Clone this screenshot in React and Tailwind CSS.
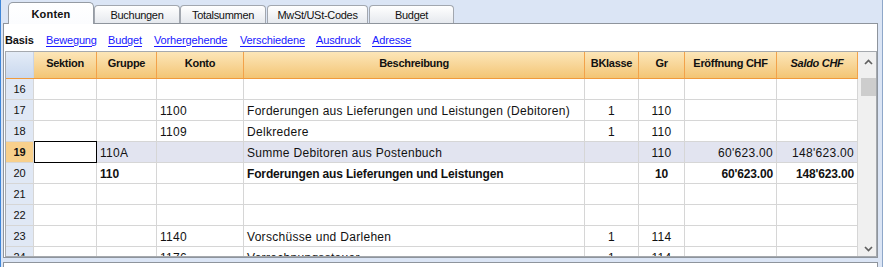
import React from "react";

const cols = [
  { key: "sek", label: "Sektion", w: "w-[63px]", align: "left" },
  { key: "grp", label: "Gruppe", w: "w-[60px]", align: "left" },
  { key: "kto", label: "Konto", w: "w-[87px]", align: "left" },
  { key: "bes", label: "Beschreibung", w: "w-[341px]", align: "left" },
  { key: "bk", label: "BKlasse", w: "w-[54px]", align: "center" },
  { key: "gr", label: "Gr", w: "w-[46px]", align: "center" },
  { key: "er", label: "Eröffnung CHF", w: "w-[92px]", align: "right" },
  { key: "sa", label: "Saldo CHF", w: "w-[81px]", align: "right", italic: true },
];

const rows = [
  { n: 16 },
  { n: 17, kto: "1100", bes: "Forderungen aus Lieferungen und Leistungen (Debitoren)", bk: "1", gr: "110" },
  { n: 18, kto: "1109", bes: "Delkredere", bk: "1", gr: "110" },
  { n: 19, grp: "110A", bes: "Summe Debitoren aus Postenbuch", gr: "110", er: "60'623.00", sa: "148'623.00", current: true },
  { n: 20, grp: "110", bes: "Forderungen aus Lieferungen und Leistungen", gr: "10", er: "60'623.00", sa: "148'623.00", bold: true },
  { n: 21 },
  { n: 22 },
  { n: 23, kto: "1140", bes: "Vorschüsse und Darlehen", bk: "1", gr: "114" },
  { n: 24, kto: "1176", bes: "Verrechnungssteuer", bk: "1", gr: "114" },
];

const alignCls = {
  left: "justify-start pl-[3px]",
  center: "justify-center",
  right: "justify-end pr-[3px]",
};

function Tab({ label, w, gap }) {
  return (
    <div
      className={`${w} ${gap ? "ml-[1px]" : ""} h-[18px] rounded-t-[4px] border border-b-0 border-[#a2a7af] bg-gradient-to-b from-white to-[#e6e9ee] flex items-center justify-center pt-[1px] text-[11px] tracking-[-0.3px] text-[#111]`}
    >
      {label}
    </div>
  );
}

function Chevron({ down }) {
  return (
    <svg width="9" height="6" viewBox="0 0 9 6">
      <polyline
        points={down ? "1,1 4.5,4.5 8,1" : "1,5 4.5,1.5 8,5"}
        fill="none"
        stroke="#606060"
        strokeWidth="1.7"
      />
    </svg>
  );
}

export default function App() {
  const links = [
    { t: "Bewegung", w: "w-[62px]" },
    { t: "Budget", w: "w-[46px]" },
    { t: "Vorhergehende", w: "w-[86px]" },
    { t: "Verschiedene", w: "w-[76px]" },
    { t: "Ausdruck", w: "w-[56px]" },
    { t: "Adresse", w: "w-[60px]" },
  ];
  return (
    <div className="w-[883px] h-[267px] overflow-hidden bg-[#dbe5f5] border-l border-l-[#3f86d8] border-r border-r-[#8ea7c9] flex flex-col font-['Liberation_Sans',Arial,sans-serif] text-[#111]">
      {/* Tabs */}
      <div className="h-[23px] shrink-0 flex items-end pl-[7px]">
        <div className="relative z-10 -mb-px h-[22px] w-[86px] rounded-t-[5px] border border-b-0 border-[#959ba3] bg-gradient-to-b from-white to-[#fbfcfe] flex items-center justify-center pt-[2px] text-[11px] font-bold tracking-[0.2px]">
          Konten
        </div>
        <Tab label="Buchungen" w="w-[86px]" />
        <Tab label="Totalsummen" w="w-[86px]" />
        <Tab label="MwSt/USt-Codes" w="w-[101px]" gap />
        <Tab label="Budget" w="w-[85px]" gap />
      </div>

      {/* Panel */}
      <div className="ml-[2px] w-[875px] h-[235px] shrink-0 border border-[#8e949c] bg-white flex flex-col">
        {/* Sub navigation */}
        <div className="h-[27px] shrink-0 flex items-center pt-[5px] pl-[1px] text-[11px] tracking-[-0.15px]">
          <span className="w-[41px] font-bold text-[#111]">Basis</span>
          {links.map((l) => (
            <span key={l.t} className={`${l.w}`}>
              <span className="text-[#1818ff] underline underline-offset-[2px]">{l.t}</span>
            </span>
          ))}
        </div>

        {/* Grid */}
        <div className="ml-[1px] w-[872px] h-[206px] border border-[#a5a9ae] flex">
          <div className="w-[852px] flex flex-col">
            {/* Header */}
            <div className="h-[27px] shrink-0 flex border-b border-[#f09a3c] bg-gradient-to-b from-[#fce6b8] to-[#f3c574]">
              <div className="w-[28px] border-r border-[#c9d4e6] bg-gradient-to-b from-[#e4ecf7] to-[#c9d8ee]" />
              {cols.map((c) => (
                <div
                  key={c.key}
                  className={`${c.w} border-r border-[#f2a24a] flex items-center justify-center pb-[3px] text-[11px] font-bold tracking-[-0.3px] ${c.italic ? "italic" : ""}`}
                >
                  {c.label}
                </div>
              ))}
            </div>
            {/* Body */}
            <div className="h-[177px] overflow-hidden flex flex-col">
              {rows.map((r) => (
                <div
                  key={r.n}
                  className={`h-[21px] shrink-0 flex border-b border-[#d6d6d6] ${r.current ? "bg-[#e2e4f0]" : ""}`}
                >
                  <div
                    className={`w-[28px] border-r border-[#d6d6d6] flex items-center justify-center pt-[1px] text-[11px] ${r.current ? "bg-[#f8d08c] font-bold" : "bg-[#e0e8f5]"}`}
                  >
                    {r.n}
                  </div>
                  {cols.map((c) => (
                    <div
                      key={c.key}
                      className={`${c.w} relative border-r border-[#d6d6d6] flex items-center pt-[1px] whitespace-nowrap overflow-hidden ${alignCls[c.align]} ${r.bold ? "font-bold text-[12px] tracking-[-0.15px]" : "text-[12px] tracking-[0.3px]"} ${r.current && c.key === "sek" ? "bg-white overflow-visible" : ""}`}
                    >
                      {r[c.key] || ""}
                      {r.current && c.key === "sek" ? (
                        <div className="absolute left-0 top-[-1px] right-[-1px] bottom-[-1px] border border-black z-10" />
                      ) : null}
                    </div>
                  ))}
                </div>
              ))}
            </div>
          </div>
          {/* Scrollbar */}
          <div className="w-[18px] bg-[#f0f0f0] flex flex-col">
            <div className="h-[20px] shrink-0 flex items-center justify-center pl-[2px]">
              <Chevron />
            </div>
            <div className="mt-[6px] ml-[3px] h-[18px] bg-[#cdcdcd] shrink-0" />
            <div className="flex-1" />
            <div className="h-[14px] shrink-0 flex items-center justify-center pl-[2px]">
              <Chevron down />
            </div>
          </div>
        </div>
      </div>

      {/* Next panel (partially visible) */}
      <div className="mt-[4px] ml-[2px] w-[875px] flex-1 border border-b-0 border-[#8e949c] bg-white" />
    </div>
  );
}
